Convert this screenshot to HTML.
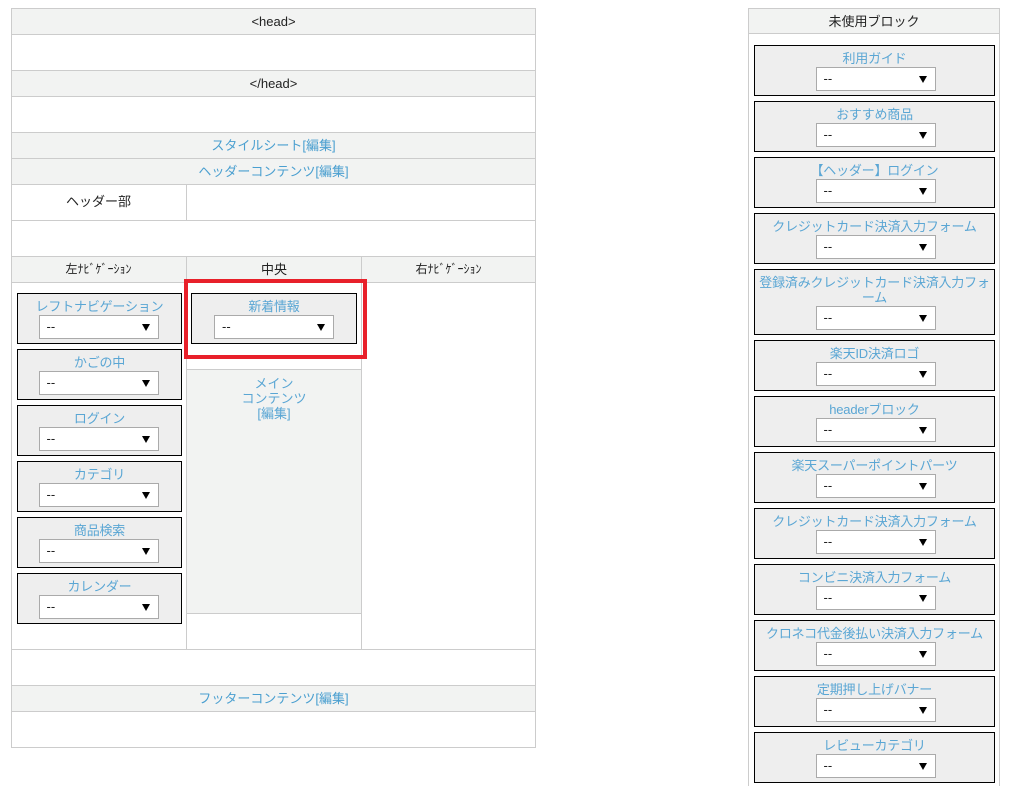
<!DOCTYPE html>
<html><head><meta charset="utf-8"><style>
*{box-sizing:border-box;margin:0;padding:0}
html{width:1009px;height:786px;overflow:hidden}
body{width:1009px;height:786px;background:#fff;position:relative;overflow:hidden;font-family:"Liberation Sans","Noto Sans CJK JP",sans-serif;font-size:13px;color:#222}
.a{position:absolute}
.r{position:absolute;left:11px;width:525px;border:1px solid #ccc;border-top:none;text-align:center;line-height:25px}
.g{background:#f2f3f2}
.lk{color:#4a9fd0}
.blk{position:absolute;border:1px solid #000;background:#eee;text-align:center;height:51px}
.blk .t{color:#5aa6d4;font-size:13px;line-height:15px;margin-top:5px;letter-spacing:-0.2px}
.sel{position:absolute;left:50%;height:24px;background:#fff;border:1px solid #aaa;font-size:13px;text-align:left;padding-left:7px;line-height:21px}
.sel:after{content:"";position:absolute;right:8px;top:8px;border-left:4px solid transparent;border-right:4px solid transparent;border-top:7px solid #000}
</style></head><body>
<div class="r g" style="top:8px;height:27px;border-top:1px solid #ccc">&lt;head&gt;</div>
<div class="r" style="top:35px;height:36px"></div>
<div class="r g" style="top:71px;height:26px">&lt;/head&gt;</div>
<div class="r" style="top:97px;height:36px"></div>
<div class="r g lk" style="top:133px;height:26px">スタイルシート[編集]</div>
<div class="r g lk" style="top:159px;height:26px">ヘッダーコンテンツ[編集]</div>
<div class="r" style="top:185px;height:36px"></div>
<div class="a" style="left:11px;top:185px;width:176px;height:35px;border-right:1px solid #ccc;text-align:center;line-height:34px">ヘッダー部</div>
<div class="r" style="top:221px;height:36px"></div>
<div class="r g" style="top:257px;height:26px"></div>
<div class="a" style="left:11px;top:257px;width:176px;height:25px;border-right:1px solid #ccc;text-align:center;line-height:25px;font-size:12px">左ﾅﾋﾞｹﾞｰｼｮﾝ</div>
<div class="a" style="left:187px;top:257px;width:175px;height:25px;border-right:1px solid #ccc;text-align:center;line-height:25px">中央</div>
<div class="a" style="left:362px;top:257px;width:173px;height:25px;text-align:center;line-height:25px;font-size:12px">右ﾅﾋﾞｹﾞｰｼｮﾝ</div>
<div class="r" style="top:283px;height:367px"></div>
<div class="a" style="left:186px;top:283px;width:1px;height:367px;background:#ccc"></div>
<div class="a" style="left:361px;top:283px;width:1px;height:367px;background:#ccc"></div>
<div class="a g" style="left:187px;top:369px;width:174px;height:245px;border-top:1px solid #ccc;border-bottom:1px solid #ccc;text-align:center;line-height:15px;padding-top:6px;color:#5aa6d4">メイン<br>コンテンツ<br>[編集]</div>
<div class="r" style="top:650px;height:36px"></div>
<div class="r g lk" style="top:686px;height:26px">フッターコンテンツ[編集]</div>
<div class="r" style="top:712px;height:36px"></div>

<div class="blk" style="left:17px;top:293px;width:165px"><div class="t">レフトナビゲーション</div><div class="sel" style="top:21px;margin-left:-61px;width:120px">--</div></div>
<div class="blk" style="left:17px;top:349px;width:165px"><div class="t">かごの中</div><div class="sel" style="top:21px;margin-left:-61px;width:120px">--</div></div>
<div class="blk" style="left:17px;top:405px;width:165px"><div class="t">ログイン</div><div class="sel" style="top:21px;margin-left:-61px;width:120px">--</div></div>
<div class="blk" style="left:17px;top:461px;width:165px"><div class="t">カテゴリ</div><div class="sel" style="top:21px;margin-left:-61px;width:120px">--</div></div>
<div class="blk" style="left:17px;top:517px;width:165px"><div class="t">商品検索</div><div class="sel" style="top:21px;margin-left:-61px;width:120px">--</div></div>
<div class="blk" style="left:17px;top:573px;width:165px"><div class="t">カレンダー</div><div class="sel" style="top:21px;margin-left:-61px;width:120px">--</div></div>

<div class="a" style="left:184px;top:279px;width:183px;height:80px;border:4px solid #e8202a"></div>
<div class="blk" style="left:191px;top:293px;width:166px"><div class="t">新着情報</div><div class="sel" style="top:21px;margin-left:-60px;width:120px">--</div></div>

<div class="a" style="left:748px;top:8px;width:252px;height:790px;border:1px solid #ccc"></div>
<div class="a g" style="left:749px;top:9px;width:250px;height:25px;border-bottom:1px solid #ccc;text-align:center;line-height:24px;padding-top:1px">未使用ブロック</div>

<div class="blk" style="left:754px;top:45px;width:241px"><div class="t">利用ガイド</div><div class="sel" style="top:21px;margin-left:-59px;width:120px">--</div></div>
<div class="blk" style="left:754px;top:101px;width:241px"><div class="t">おすすめ商品</div><div class="sel" style="top:21px;margin-left:-59px;width:120px">--</div></div>
<div class="blk" style="left:754px;top:157px;width:241px"><div class="t">【ヘッダー】ログイン</div><div class="sel" style="top:21px;margin-left:-59px;width:120px">--</div></div>
<div class="blk" style="left:754px;top:213px;width:241px"><div class="t">クレジットカード決済入力フォーム</div><div class="sel" style="top:21px;margin-left:-59px;width:120px">--</div></div>
<div class="blk" style="left:754px;top:269px;width:241px;height:66px"><div class="t">登録済みクレジットカード決済入力フォ<br>ーム</div><div class="sel" style="top:36px;margin-left:-59px;width:120px">--</div></div>
<div class="blk" style="left:754px;top:340px;width:241px"><div class="t">楽天ID決済ロゴ</div><div class="sel" style="top:21px;margin-left:-59px;width:120px">--</div></div>
<div class="blk" style="left:754px;top:396px;width:241px"><div class="t">headerブロック</div><div class="sel" style="top:21px;margin-left:-59px;width:120px">--</div></div>
<div class="blk" style="left:754px;top:452px;width:241px"><div class="t">楽天スーパーポイントパーツ</div><div class="sel" style="top:21px;margin-left:-59px;width:120px">--</div></div>
<div class="blk" style="left:754px;top:508px;width:241px"><div class="t">クレジットカード決済入力フォーム</div><div class="sel" style="top:21px;margin-left:-59px;width:120px">--</div></div>
<div class="blk" style="left:754px;top:564px;width:241px"><div class="t">コンビニ決済入力フォーム</div><div class="sel" style="top:21px;margin-left:-59px;width:120px">--</div></div>
<div class="blk" style="left:754px;top:620px;width:241px"><div class="t">クロネコ代金後払い決済入力フォーム</div><div class="sel" style="top:21px;margin-left:-59px;width:120px">--</div></div>
<div class="blk" style="left:754px;top:676px;width:241px"><div class="t">定期押し上げバナー</div><div class="sel" style="top:21px;margin-left:-59px;width:120px">--</div></div>
<div class="blk" style="left:754px;top:732px;width:241px"><div class="t">レビューカテゴリ</div><div class="sel" style="top:21px;margin-left:-59px;width:120px">--</div></div>
</body></html>
